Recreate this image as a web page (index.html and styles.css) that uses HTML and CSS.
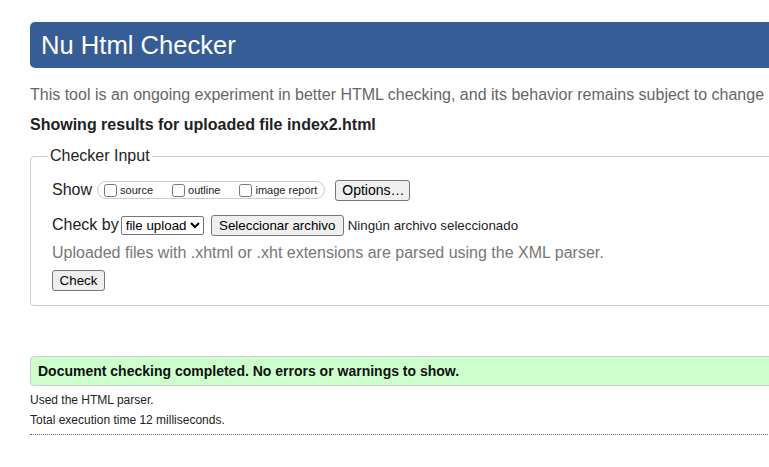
FILE: index.html
```html
<!DOCTYPE html>
<html lang="en">
<head>
<meta charset="utf-8">
<title>Nu Html Checker</title>
<link rel="stylesheet" href="styles.css">
</head>
<body>
<div class="page">
  <h1 class="title">Nu Html Checker</h1>
  <p class="intro">This tool is an ongoing experiment in better HTML checking, and its behavior remains subject to change</p>
  <p class="showing">Showing results for uploaded file index2.html</p>
  <fieldset class="input">
    <legend class="legend">Checker Input</legend>
    <div class="row row-show">
      <span class="label">Show</span>
      <span class="pill">
        <label class="opt"><input type="checkbox" class="cb"><span>source</span></label>
        <label class="opt"><input type="checkbox" class="cb"><span>outline</span></label>
        <label class="opt"><input type="checkbox" class="cb"><span>image report</span></label>
      </span>
      <button class="btn btn-options" type="button">Options…</button>
    </div>
    <div class="row row-by">
      <span class="label">Check by</span>
      <select class="select"><option>file upload</option></select>
      <button class="btn btn-file" type="button">Seleccionar archivo</button>
      <span class="nofile">Ningún archivo seleccionado</span>
    </div>
    <p class="note">Uploaded files with .xhtml or .xht extensions are parsed using the XML parser.</p>
    <div class="row row-check">
      <button class="btn btn-check" type="button">Check</button>
    </div>
  </fieldset>
  <p class="success">Document checking completed. No errors or warnings to show.</p>
  <p class="meta">Used the HTML parser.</p>
  <p class="meta">Total execution time 12 milliseconds.</p>
  <hr class="rule">
</div>
</body>
</html>
```
FILE: styles.css
```css
html, body {
  margin: 0;
  padding: 0;
  overflow: hidden;
  background: #fff;
}
body {
  font-family: "Liberation Sans", Arial, sans-serif;
  color: #222;
}
.page {
  margin-left: 30px;
  width: 900px;
  padding-top: 22px;
}
.title {
  margin: 0;
  height: 46px;
  box-sizing: border-box;
  background: #365d95;
  color: #fff;
  font-weight: normal;
  font-size: 25.6px;
  line-height: 46px;
  padding-left: 11px;
  border-radius: 5px;
}
.intro {
  margin: 17px 0 0;
  font-size: 16px;
  line-height: 20px;
  color: #666;
}
.showing {
  margin: 10px 0 0;
  font-size: 16px;
  line-height: 20px;
  font-weight: bold;
  color: #222;
}
.input {
  margin: 12px 0 0;
  padding: 14px 21px 14px;
  border: 1px solid #ccc;
  border-radius: 4px;
  min-width: 0;
}
.legend {
  font-size: 16px;
  padding: 0 2px;
  margin-left: -4px;
  color: #222;
}
.row {
  display: flex;
  align-items: center;
}
.label {
  font-size: 16px;
  color: #222;
}
.row-show {
  height: 22px;
}
.pill {
  display: inline-flex;
  align-items: center;
  margin-left: 5px;
  height: 18px;
  box-sizing: border-box;
  border: 1px solid #ccc;
  border-radius: 9px;
  padding: 0 7px 0 6px;
  white-space: nowrap;
}
.opt {
  display: inline-flex;
  align-items: center;
  font-size: 11px;
  color: #222;
  margin-right: 19px;
  white-space: nowrap;
}
.opt:last-child {
  margin-right: 0;
}
.cb {
  margin: 0 3px 0 0;
  width: 13px;
  height: 13px;
}
.btn {
  font-family: "Liberation Sans", Arial, sans-serif;
  font-size: 13.33px;
  color: #000;
  background: #efefef;
  border: 1px solid #767676;
  border-radius: 3px;
  padding: 0 6px;
  box-sizing: border-box;
  white-space: nowrap;
}
.btn-options {
  margin-left: 10px;
  height: 21px;
  width: 75px;
  font-size: 14px;
}
.row-by {
  margin-top: 13px;
  height: 22px;
}
.select {
  margin-left: 2px;
  height: 19px;
  width: 83px;
  font-family: "Liberation Sans", Arial, sans-serif;
  font-size: 13.33px;
  color: #000;
  border: 1px solid #767676;
  border-radius: 2px;
  background: #fff;
  padding: 0;
}
.btn-file {
  margin-left: 7px;
  height: 21px;
  width: 133px;
  font-size: 13.33px;
}
.nofile {
  margin-left: 4px;
  font-size: 13.33px;
  color: #222;
}
.note {
  margin: 7px 0 0;
  font-size: 16px;
  line-height: 20px;
  color: #777;
}
.row-check {
  margin-top: 7px;
}
.btn-check {
  height: 21px;
  width: 53px;
}
.success {
  margin: 50px 0 0;
  height: 30px;
  box-sizing: border-box;
  border: 1px solid #ccc;
  border-radius: 4px;
  background: #ccffcc;
  font-size: 14px;
  font-weight: bold;
  line-height: 28px;
  padding-left: 7px;
  color: #111;
}
.meta {
  margin: 7px 0 0;
  font-size: 12px;
  line-height: 14px;
  color: #222;
}
.meta + .meta {
  margin-top: 6px;
}
.rule {
  margin: 7px 0 0;
  border: 0;
  border-top: 1px dotted #666;
  height: 0;
}
```
